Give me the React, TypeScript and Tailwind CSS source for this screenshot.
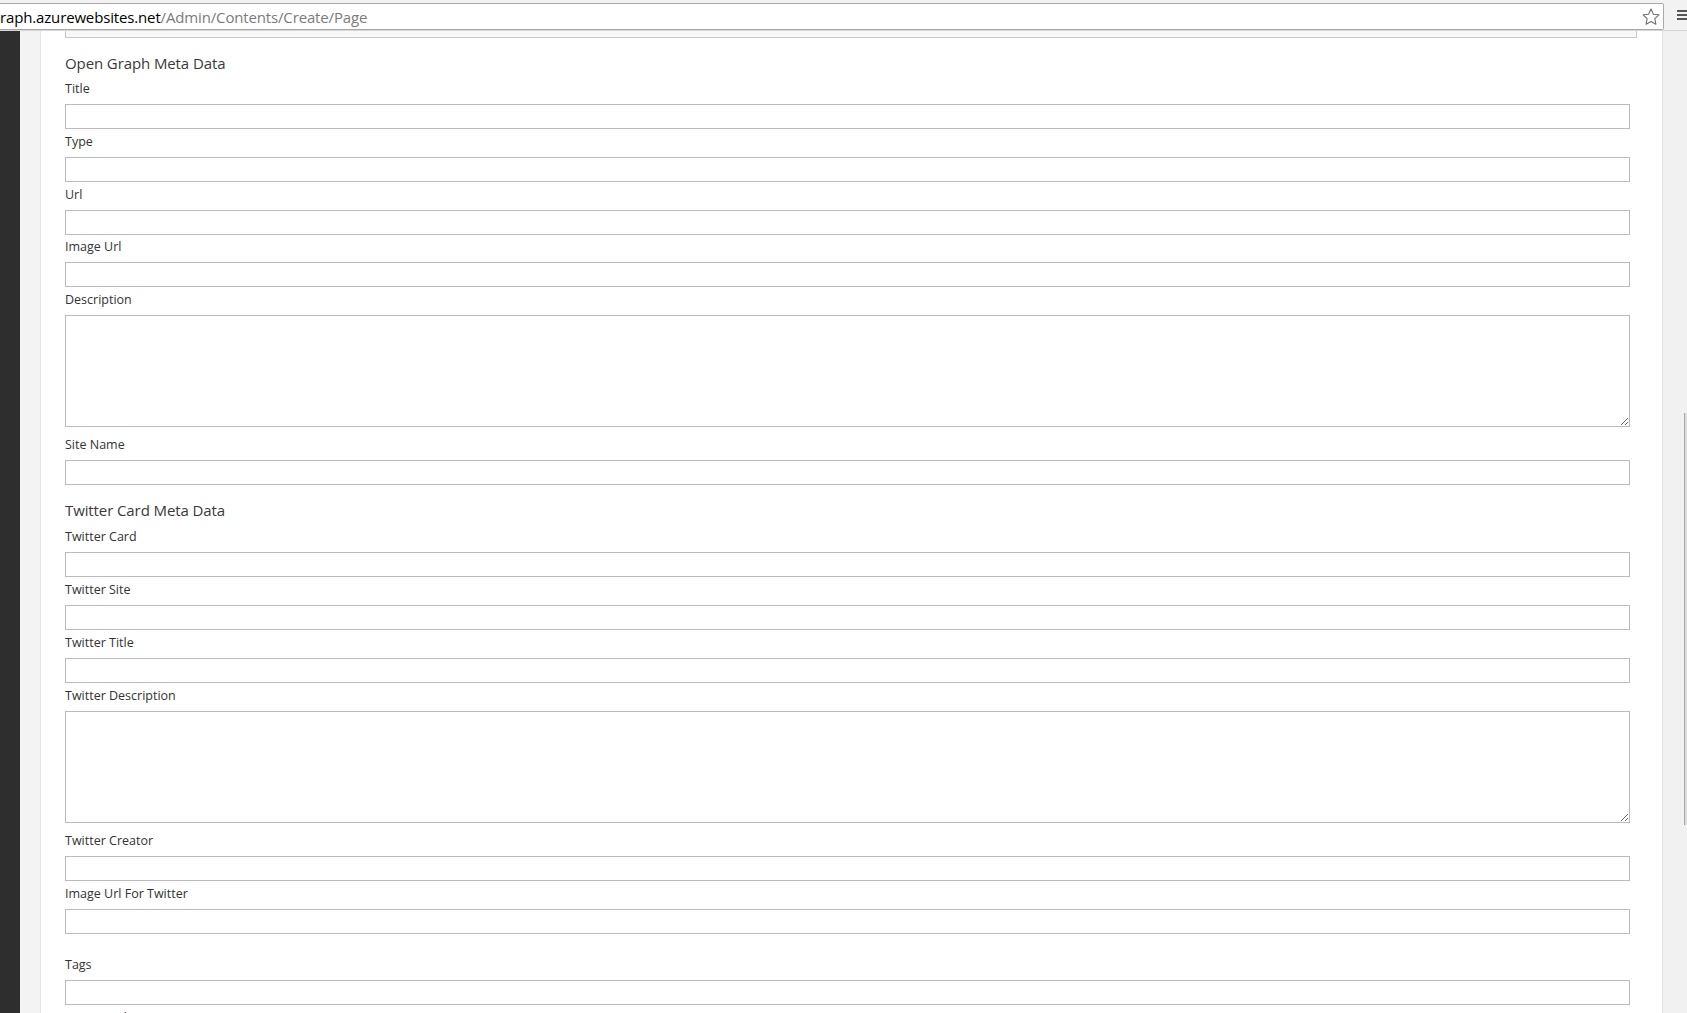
import React from "react";

type Field = { label: string; multiline?: boolean };

const openGraph: Field[] = [
  { label: "Title" },
  { label: "Type" },
  { label: "Url" },
  { label: "Image Url" },
  { label: "Description", multiline: true },
  { label: "Site Name" },
];

const twitter: Field[] = [
  { label: "Twitter Card" },
  { label: "Twitter Site" },
  { label: "Twitter Title" },
  { label: "Twitter Description", multiline: true },
  { label: "Twitter Creator" },
  { label: "Image Url For Twitter" },
];

const font = { fontFamily: '"Open Sans", "Noto Sans", sans-serif' };

function Label({ children }: { children: React.ReactNode }) {
  return <div className="h-[24px] pt-[1px] text-[12.5px] leading-[16px] text-[#333]">{children}</div>;
}

function FormField({ field, loose }: { field: Field; loose?: boolean }) {
  const gap = field.multiline ? "mb-[9px]" : loose ? "mb-[4px]" : "mb-[3.75px]";
  return (
    <div className={gap}>
      <Label>{field.label}</Label>
      {field.multiline ? (
        <textarea
          readOnly
          className="block h-[112px] w-full border border-[#bbbbbb] bg-white outline-none"
        />
      ) : (
        <input
          readOnly
          className="block h-[25px] w-full border border-[#bbbbbb] bg-white outline-none"
        />
      )}
    </div>
  );
}

function Heading({ children }: { children: React.ReactNode }) {
  return (
    <div className="h-[28px] pt-[0.5px] text-[15px] leading-[20px] tracking-[-0.1px] text-[#3a3a3a]">
      {children}
    </div>
  );
}

function Toolbar() {
  return (
    <div className="flex h-[31px] bg-[#f2f2f2] border-b border-[#d6d6d6]">
      <div className="mt-[3px] flex h-[27px] w-[1664px] items-center border border-l-0 border-[#a8a8a8] rounded-r-[2px] bg-white">
        <div className="flex-1 whitespace-nowrap text-[15px] leading-[20px] tracking-[-0.15px]" style={font}>
          <span className="text-black">raph.azurewebsites.net</span>
          <span className="text-[#7b7b7b]">/Admin/Contents/Create/Page</span>
        </div>
        <svg width="20" height="20" viewBox="0 0 24 24" className="mr-[2px]">
          <path
            d="M12 2.5l2.9 6.1 6.6.8-4.9 4.6 1.3 6.6L12 17.3l-5.9 3.3 1.3-6.6-4.9-4.6 6.6-.8z"
            fill="none"
            stroke="#707070"
            strokeWidth="1.3"
            strokeLinejoin="round"
          />
        </svg>
      </div>
      <div className="flex flex-1 flex-col gap-[2px] pl-[13px] pt-[10px]">
        <div className="h-[2px] bg-[#555]" />
        <div className="h-[2px] bg-[#555]" />
        <div className="h-[2px] bg-[#555]" />
      </div>
    </div>
  );
}

export default function App() {
  return (
    <div className="h-[1013px] w-[1687px] overflow-hidden bg-white" style={font}>
      <Toolbar />
      <div className="flex h-[982px]">
        <div className="w-[20px] bg-[#2e2e2e]" />
        <div className="w-[21px] border-r border-[#e4e4e6] bg-[#f3f3f4]" />
        <div className="w-[1621px] pl-[24px] pr-[32px]">
          <div className="-mr-[7px] h-[7px] border border-t-0 border-[#c8c8c8] bg-[#f8f8f8]" />
          <div className="pt-[14px]">
            <Heading>Open Graph Meta Data</Heading>
            {openGraph.map((f) => (
              <FormField key={f.label} field={f} />
            ))}
          </div>
          <div className="pt-[11px]">
            <Heading>Twitter Card Meta Data</Heading>
            {twitter.map((f) => (
              <FormField key={f.label} field={f} loose />
            ))}
          </div>
          <div className="pt-[18px]">
            <FormField field={{ label: "Tags" }} loose />
            <Label>Structured Meta Data</Label>
          </div>
        </div>
        <div className="relative flex-1 border-l border-[#e2e2e2] bg-[#f1f1f1]">
          <div className="absolute left-[21px] top-[382px] h-[412px] w-[4px] border-l border-[#a9a9a9] bg-[#dcdcdc]" />
        </div>
      </div>
    </div>
  );
}
